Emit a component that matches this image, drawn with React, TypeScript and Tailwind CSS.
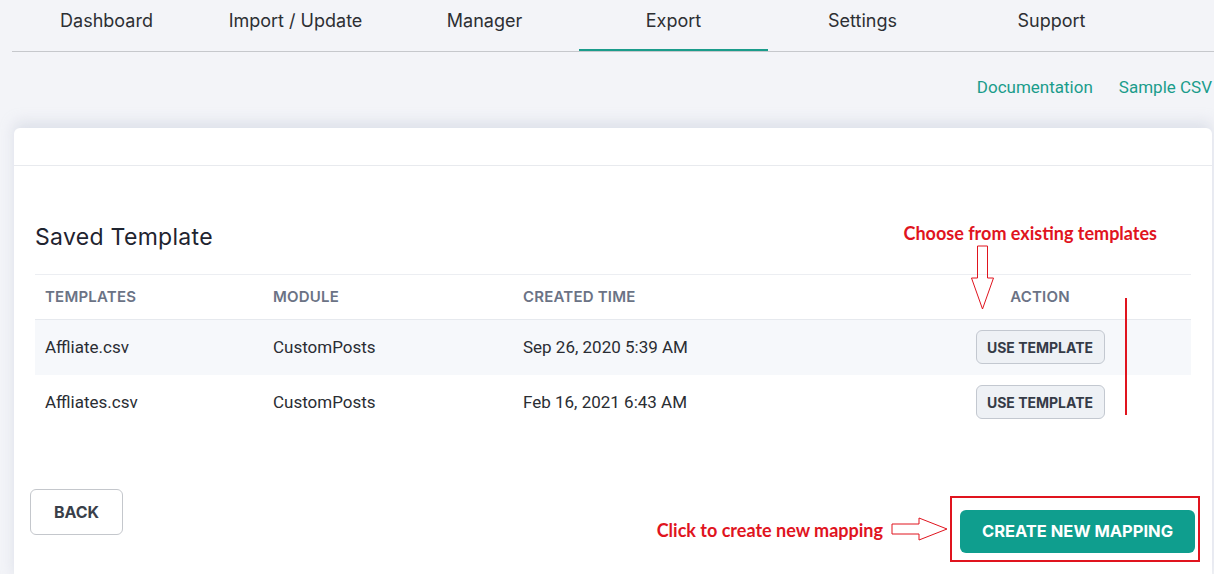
import React from 'react';

const tabs = ['Dashboard', 'Import / Update', 'Manager', 'Export', 'Settings', 'Support'];

const rows = [
    { name: 'Affliate.csv', module: 'CustomPosts', created: 'Sep 26, 2020 5:39 AM' },
    { name: 'Affliates.csv', module: 'CustomPosts', created: 'Feb 16, 2021 6:43 AM' },
];

const App: React.FC = () => {
    return (
        <div className="w-[1214px] h-[574px] overflow-hidden bg-[#f3f4f8] font-['Inter','Open_Sans',sans-serif]">
            {/* Tabs */}
            <div className="ml-3 flex border-b border-[#c6c8cc]">
                {tabs.map((t) => (
                    <div
                        key={t}
                        className={`w-[189px] h-[51px] flex justify-center pt-[7px] text-[18px] text-[#2d2f33] ${t === 'Export' ? 'border-b-2 border-[#1a9c8b]' : ''}`}
                    >
                        {t}
                    </div>
                ))}
            </div>

            {/* Links */}
            <div className="flex justify-end gap-[26px] pt-[23px] pr-[2px] font-['Roboto',sans-serif] text-[17px] text-[#1a9c8b]">
                <span>Documentation</span>
                <span>Sample CSV</span>
            </div>

            {/* Card */}
            <div className="mt-[27px] ml-[14px] mr-[2px] bg-white rounded-md shadow-[0_-6px_14px_rgba(180,188,205,0.35)]">
                <div className="h-[38px] border-b border-[#e8eaee]"></div>

                <div className="px-[21px] pt-[53px]">
                    <div className="relative flex justify-between items-start h-[33px]">
                        <h2 className="text-[23px] text-[#1f2430] mt-[1px] tracking-[0.3px]">Saved Template</h2>
                        <span className="mr-[34px] mt-[1px] font-['Lato',sans-serif] font-bold text-[18px] text-[#e0141e]">
                            Choose from existing templates
                        </span>
                    </div>

                    {/* Table */}
                    <div className="relative mt-[22px] border-t border-[#eceef2]">
                        <div className="grid grid-cols-[228px_250px_376px_302px] h-[45px] pt-[2px] items-center border-b border-[#e6e9ee] text-[15px] font-semibold text-[#6b7385] tracking-[0.2px]">
                            <div className="pl-[10px]">TEMPLATES</div>
                            <div className="pl-[10px]">MODULE</div>
                            <div className="pl-[10px]">CREATED TIME</div>
                            <div className="text-center">ACTION</div>
                        </div>
                        {rows.map((r, i) => (
                            <div
                                key={r.name}
                                className={`grid grid-cols-[228px_250px_376px_302px] h-[55px] items-center font-['Roboto',sans-serif] text-[17px] text-[#2a2d33] ${i === 0 ? 'bg-[#f6f8fb]' : ''}`}
                            >
                                <div className="pl-[10px] pt-[2px]">{r.name}</div>
                                <div className="pl-[10px] pt-[2px]">{r.module}</div>
                                <div className="pl-[10px] pt-[2px]">{r.created}</div>
                                <div className="flex justify-center">
                                    <button className="h-[34px] w-[129px] rounded-md border border-[#c3c8d0] bg-[#eef1f5] text-[14px] font-bold text-[#353b47] font-['Inter',sans-serif]">
                                        USE TEMPLATE
                                    </button>
                                </div>
                            </div>
                        ))}

                        {/* annotation: red line */}
                        <div className="absolute left-[1090px] top-[23px] w-[2px] h-[117px] bg-[#e0141e]"></div>
                        {/* annotation: down arrow */}
                        <svg className="absolute left-[934px] top-[-30px]" width="26" height="66" viewBox="0 0 26 66">
                            <path d="M8.5 1 H18.5 V33 H24.5 L13.5 64 L2.5 33 H8.5 Z" fill="none" stroke="#e0141e" strokeWidth="1" />
                        </svg>
                    </div>

                    {/* Footer */}
                    <div className="flex justify-between items-start mt-[59px] mr-[-9px]">
                        <button className="ml-[-5px] h-[46px] w-[93px] rounded-md border border-[#c4c7cc] bg-white text-[16px] font-bold text-[#3a3f4a]">
                            BACK
                        </button>
                        <div className="flex items-center mt-[7px]">
                            <span className="font-['Lato',sans-serif] font-bold text-[18px] text-[#e0141e] mr-[8px] mt-[4px]">
                                Click to create new mapping
                            </span>
                            <svg width="58" height="30" viewBox="0 0 58 30" className="mr-[1px]">
                                <path d="M1 10 H28 V4 L56 15 L28 26 V20 H1 Z" fill="none" stroke="#e0141e" strokeWidth="1" />
                            </svg>
                            <div className="border-2 border-[#e0141e] pl-[8px] pr-[3px] pt-[12px] pb-[7px]">
                                <button className="h-[43px] w-[235px] rounded-md bg-[#0f9e8e] text-white text-[16.5px] font-bold">
                                    CREATE NEW MAPPING
                                </button>
                            </div>
                        </div>
                    </div>
                    <div className="h-[20px]"></div>
                </div>
            </div>
        </div>
    );
};

export default App;
